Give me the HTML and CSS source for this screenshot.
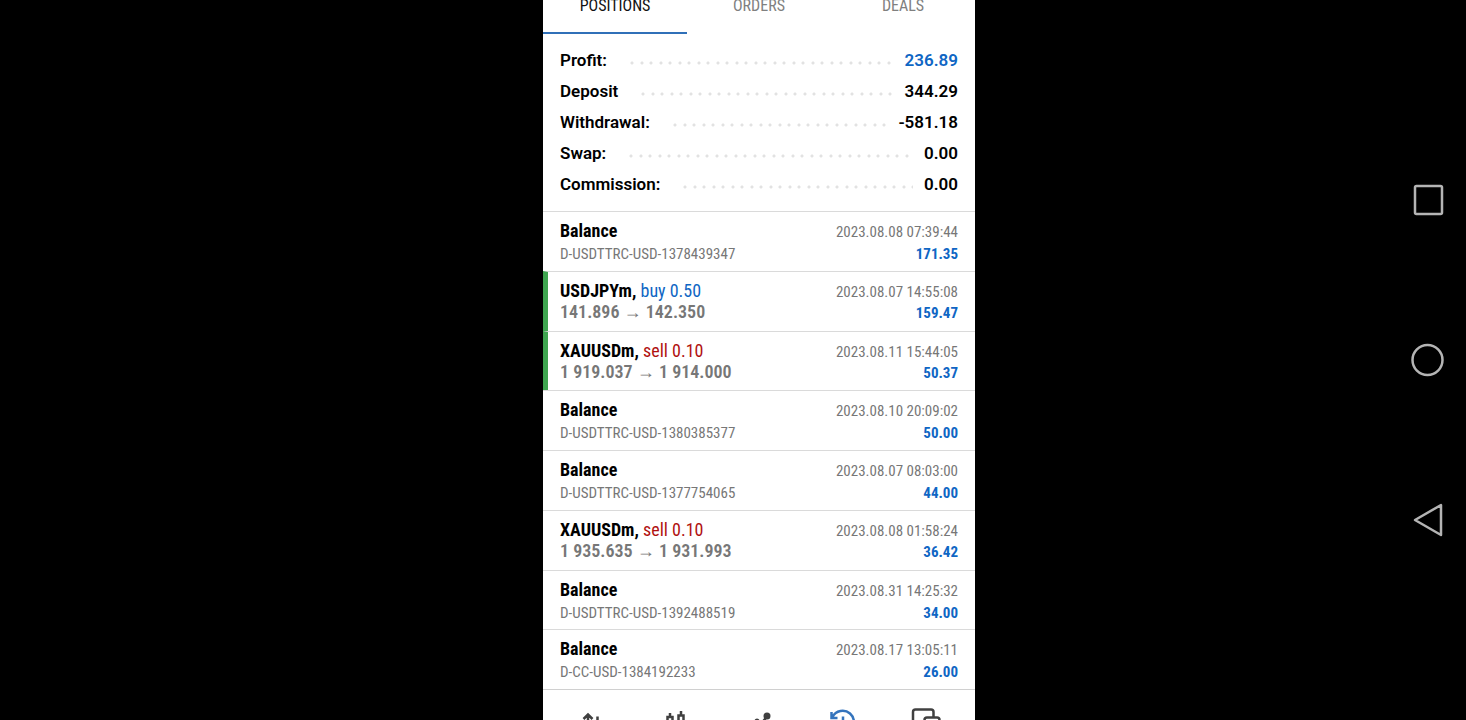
FILE: index.html
```html
<!DOCTYPE html>
<html lang="en">
<head>
    <meta charset="UTF-8">
    <meta name="viewport" content="width=device-width, initial-scale=1.0">
    <title>History</title>
    <link rel="stylesheet" href="styles.css">
</head>

<body>

    <main class="phone">
        <!-- Tabs -->
        <div class="tabs">
            <button class="tab active-tab">POSITIONS</button>
            <button class="tab">ORDERS</button>
            <button class="tab">DEALS</button>
        </div>

        <!-- Account summary -->
        <dl class="summary">
            <div class="summary-row"><dt>Profit:</dt><dd class="dots"></dd><dd class="profit">236.89</dd></div>
            <div class="summary-row"><dt>Deposit</dt><dd class="dots"></dd><dd>344.29</dd></div>
            <div class="summary-row"><dt>Withdrawal:</dt><dd class="dots"></dd><dd>-581.18</dd></div>
            <div class="summary-row"><dt>Swap:</dt><dd class="dots"></dd><dd>0.00</dd></div>
            <div class="summary-row"><dt>Commission:</dt><dd class="dots"></dd><dd>0.00</dd></div>
        </dl>

        <!-- History list -->
        <ul class="history">
            <li class="deal">
                <div class="line"><span class="title">Balance</span><time>2023.08.08 07:39:44</time></div>
                <div class="line"><span class="note">D-USDTTRC-USD-1378439347</span><span class="amount">171.35</span></div>
            </li>
            <li class="deal marked">
                <div class="line"><span class="title">USDJPYm, <span class="buy">buy 0.50</span></span><time>2023.08.07 14:55:08</time></div>
                <div class="line"><span class="price">141.896 <span class="arrow">→</span> 142.350</span><span class="amount">159.47</span></div>
            </li>
            <li class="deal marked">
                <div class="line"><span class="title">XAUUSDm, <span class="sell">sell 0.10</span></span><time>2023.08.11 15:44:05</time></div>
                <div class="line"><span class="price">1 919.037 <span class="arrow">→</span> 1 914.000</span><span class="amount">50.37</span></div>
            </li>
            <li class="deal">
                <div class="line"><span class="title">Balance</span><time>2023.08.10 20:09:02</time></div>
                <div class="line"><span class="note">D-USDTTRC-USD-1380385377</span><span class="amount">50.00</span></div>
            </li>
            <li class="deal">
                <div class="line"><span class="title">Balance</span><time>2023.08.07 08:03:00</time></div>
                <div class="line"><span class="note">D-USDTTRC-USD-1377754065</span><span class="amount">44.00</span></div>
            </li>
            <li class="deal">
                <div class="line"><span class="title">XAUUSDm, <span class="sell">sell 0.10</span></span><time>2023.08.08 01:58:24</time></div>
                <div class="line"><span class="price">1 935.635 <span class="arrow">→</span> 1 931.993</span><span class="amount">36.42</span></div>
            </li>
            <li class="deal">
                <div class="line"><span class="title">Balance</span><time>2023.08.31 14:25:32</time></div>
                <div class="line"><span class="note">D-USDTTRC-USD-1392488519</span><span class="amount">34.00</span></div>
            </li>
            <li class="deal">
                <div class="line"><span class="title">Balance</span><time>2023.08.17 13:05:11</time></div>
                <div class="line"><span class="note">D-CC-USD-1384192233</span><span class="amount">26.00</span></div>
            </li>
        </ul>

        <!-- Bottom navigation -->
        <nav class="bottom-nav">
            <button class="nav-btn" aria-label="Quotes">
                <svg viewBox="0 0 36 36"><path d="M13 30V12.500M8.500 17L13 12.500L17.500 17M22.500 14.500V29M18 26L22.500 30L27 26"/></svg>
            </button>
            <button class="nav-btn" aria-label="Chart">
                <svg viewBox="0 0 36 36"><path d="M12 11V14M12 26V30M23 9V13M23 25V29M9.500 15H14.500V26H9.500ZM20.500 13.500H25.500V25H20.500Z"/></svg>
            </button>
            <button class="nav-btn" aria-label="Trade">
                <svg viewBox="0 0 36 36"><path d="M8 27L16 19L20 22L26 14.500"/><circle class="fill" cx="26" cy="14" r="3.500"/><circle class="fill" cx="16" cy="19" r="2.500"/></svg>
            </button>
            <button class="nav-btn active-nav" aria-label="History">
                <svg viewBox="0 0 36 36"><path d="M8.500 15A11.300 11.300 0 1 1 8 24M7.500 10V16H13.500M19 14.500V21L24 24"/></svg>
            </button>
            <button class="nav-btn" aria-label="Messages">
                <svg viewBox="0 0 36 36"><path d="M17 28H8.500Q6 28 6 25V10Q6 7.500 8.500 7.500H24Q26.500 7.500 26.500 10V15.500"/><rect x="17.500" y="15.500" width="15" height="14" rx="2.500"/></svg>
            </button>
        </nav>
    </main>

    <!-- System keys -->
    <aside class="system-keys">
        <button class="key" aria-label="Recent apps">
            <svg viewBox="0 0 32 32"><rect x="3" y="2" width="27" height="28" rx="1.500"/></svg>
        </button>
        <button class="key" aria-label="Home">
            <svg viewBox="0 0 32 32"><circle cx="15.500" cy="16" r="15"/></svg>
        </button>
        <button class="key" aria-label="Back">
            <svg viewBox="0 0 32 32"><path d="M3 16L29 1V31Z"/></svg>
        </button>
    </aside>

</body>
</html>
```
FILE: styles.css
```css
* {
    box-sizing: border-box;
}
body {
    margin: 0;
    min-height: 100vh;
    display: grid;
    grid-template-columns: 543fr 432fr 491fr;
    background-color: #000;
    font-family: "Roboto Condensed", Roboto, sans-serif;
}
button {
    padding: 0;
    border: none;
    background: none;
    font-family: inherit;
    cursor: pointer;
}
.phone {
    grid-column: 2;
    display: flex;
    flex-direction: column;
    min-width: 0;
    background-color: #fff;
}
.tabs {
    display: flex;
}
.tab {
    flex: 1;
    height: 34px;
    padding-bottom: 20px;
    border-bottom: 2px solid transparent;
    font-size: 16px;
    line-height: 12px;
    color: #808080;
}
.active-tab {
    color: #111;
    border-bottom-color: #3070b8;
}
.summary {
    margin: 0;
    padding: 11px 17px;
    font-family: Roboto, sans-serif;
    font-size: 17px;
    font-weight: 600;
    line-height: 31px;
    color: #000;
}
.summary-row {
    display: flex;
}
.summary dd {
    margin: 0;
}
.summary .dots {
    flex: 1;
    margin: 0 11px 0 23px;
    background-image: radial-gradient(circle at 2px 2px, #e2e2e2 1px, transparent 2px), radial-gradient(circle at 2px 2px, #e2e2e2 1px, transparent 2px);
    background-size: 19px 4px;
    background-position: 0 16px, 10px 16px;
    background-repeat: repeat-x;
}
.summary .profit {
    color: #0f66c4;
}
.history {
    flex: 1;
    display: grid;
    grid-auto-rows: 1fr;
    margin: 0;
    padding: 0;
    list-style: none;
}
.deal {
    padding: 8px 17px 0;
    border-top: 1px solid #dadada;
}
.marked {
    padding-left: 12px;
    border-left: 5px solid #3fa650;
}
.line {
    display: flex;
    justify-content: space-between;
    align-items: baseline;
    height: 21px;
    line-height: 21px;
    white-space: nowrap;
}
.title {
    font-size: 18px;
    font-weight: 700;
    color: #000;
}
.buy, .sell {
    font-weight: 400;
}
.buy {
    color: #0f66c4;
}
.sell {
    color: #b01010;
}
.price {
    font-size: 18px;
    font-weight: 600;
    color: #777;
}
.arrow {
    font-family: "Liberation Sans", sans-serif;
    font-size: 18px;
    line-height: 1;
}
.note, time {
    font-size: 15px;
    color: #777;
}
.note {
    line-height: 27px;
}
.amount {
    font-size: 15px;
    font-weight: 700;
    color: #0f66c4;
}
.bottom-nav {
    display: flex;
    height: 31px;
    padding: 12px 8px 0;
    border-top: 1px solid #d0d0d0;
    overflow: hidden;
}
.nav-btn {
    flex: 1;
    height: 36px;
    color: #404040;
}
.active-nav {
    color: #3474bd;
}
svg {
    display: block;
    margin: 0 auto;
    fill: none;
    stroke: currentColor;
}
.nav-btn svg {
    width: 36px;
    height: 36px;
    stroke-width: 2.5;
}
.fill {
    fill: currentColor;
    stroke: none;
}
.system-keys {
    display: flex;
    flex-direction: column;
    justify-content: center;
    align-items: flex-end;
    gap: 128px;
    padding-right: 22px;
}
.key {
    color: #b4b4b4;
}
.key svg {
    width: 32px;
    height: 32px;
    stroke-width: 2.5;
    stroke-linejoin: round;
    overflow: visible;
}
```
